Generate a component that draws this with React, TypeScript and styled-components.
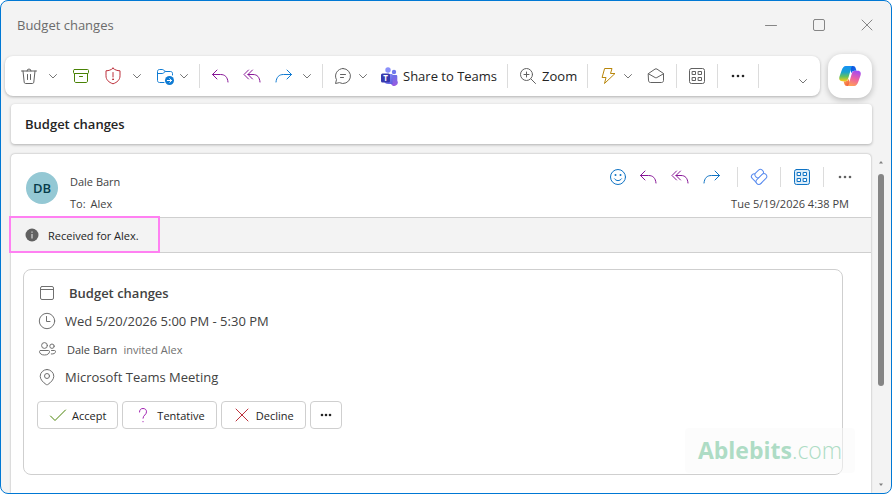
import React, { ReactNode } from "react";
import styled, { createGlobalStyle } from "styled-components";

const GlobalStyle = createGlobalStyle`
  * { box-sizing: border-box; }
  body {
    margin: 0;
    background: #fff;
    font-family: "Open Sans", "Noto Sans", sans-serif;
    font-size: 13px;
    color: #242424;
  }
  button { font: inherit; color: inherit; }
  h1, h2, p { margin: 0; font: inherit; }
`;

const Window = styled.div`
  display: flex;
  flex-direction: column;
  height: 100vh;
  overflow: hidden;
  border: 1px solid #0078d4;
  border-radius: 8px;
  background: #f3f3f3;
`;

const TitleBar = styled.header`
  display: flex;
  align-items: center;
  justify-content: space-between;
  flex: none;
  height: 48px;
  padding-left: 16px;
  color: #6b6b6b;
`;

const PlainButton = styled.button`
  display: inline-flex;
  align-items: center;
  justify-content: center;
  flex: none;
  padding: 0;
  border: 0;
  background: none;
`;

const WindowButton = styled(PlainButton)`
  width: 48px;
  height: 48px;
  color: #858585;
`;

const ToolbarRow = styled.div`
  display: flex;
  align-items: center;
  flex: none;
  gap: 8px;
  height: 44px;
  margin: 5px 19px 0 4px;
`;

const Toolbar = styled.div`
  display: flex;
  align-items: center;
  flex: 1;
  gap: 8px;
  height: 40px;
  padding: 0 9px 0 12px;
  border-radius: 8px;
  background: #fff;
  box-shadow: 0 1px 3px rgba(0, 0, 0, 0.28);
`;

const IconButton = styled(PlainButton)<{ $color?: string }>`
  width: 24px;
  height: 32px;
  color: ${(p) => p.$color ?? "#616161"};
`;

const ChevronButton = styled(PlainButton)<{ $narrow?: boolean }>`
  width: ${(p) => (p.$narrow ? 14 : 16)}px;
  height: 32px;
  color: #757575;
`;

const OverflowButton = styled(ChevronButton)`
  align-items: flex-end;
  height: 20px;
  margin-left: auto;
`;

const LabelButton = styled(PlainButton)<{ $start?: number }>`
  gap: 4px;
  padding: 0 2px 0 ${(p) => p.$start ?? 0}px;
  height: 32px;
  white-space: nowrap;
  > svg { color: #616161; }
`;

const Group = styled.div<{ $gap?: number; $end?: number }>`
  display: flex;
  align-items: center;
  gap: ${(p) => p.$gap ?? 0}px;
  margin-right: ${(p) => p.$end ?? 0}px;
`;

const Divider = styled.span<{ $height?: number }>`
  flex: none;
  width: 1px;
  height: ${(p) => p.$height ?? 24}px;
  background: #dcdcdc;
`;

const CopilotButton = styled(PlainButton)`
  width: 44px;
  height: 44px;
  border-radius: 14px;
  background: #fff;
  box-shadow: 0 2px 6px rgba(0, 0, 0, 0.24);
`;

const SubjectCard = styled.h1`
  display: flex;
  align-items: center;
  flex: none;
  height: 40px;
  margin: 6px 19px 0 10px;
  padding: 0 14px;
  border-radius: 4px;
  background: #fff;
  box-shadow: 0 1px 3px rgba(0, 0, 0, 0.28);
  font-weight: 600;
`;

const MessageArea = styled.main`
  display: grid;
  grid-template-columns: minmax(0, 1fr) 20px;
  flex: 1;
  min-height: 0;
  margin: 10px 0 0 10px;
`;

const MessageCard = styled.article`
  position: relative;
  border-radius: 4px 4px 0 0;
  background: #fff;
  box-shadow: 0 0 2px rgba(0, 0, 0, 0.36);
`;

const MessageHeader = styled.div`
  display: flex;
  align-items: center;
  height: 63px;
  padding: 0 14px 0 15px;
  gap: 12px;
`;

const Avatar = styled.span`
  display: flex;
  align-items: center;
  justify-content: center;
  width: 32px;
  height: 32px;
  margin-top: 4px;
  border-radius: 50%;
  background: #94c8d4;
  color: #063b4a;
  font-weight: 600;
`;

const Sender = styled.div`
  flex: 1;
  padding-top: 14px;
  font-size: 11px;
  line-height: 22px;
  color: #424242;
`;

const HeaderSide = styled.div`
  display: flex;
  flex-direction: column;
  align-items: flex-end;
  padding-top: 4px;
`;

const HeaderActions = styled.div`
  display: flex;
  align-items: center;
  gap: 9px;
  height: 32px;
`;

const SentTime = styled.time`
  padding-right: 8px;
  font-size: 11px;
  line-height: 22px;
  color: #424242;
`;

const Notice = styled.div`
  position: relative;
  display: flex;
  align-items: center;
  gap: 9px;
  height: 36px;
  padding-left: 14px;
  border: solid #cfcfcf;
  border-width: 1px 0;
  background: #f3f3f3;
  font-size: 11px;
`;

const Highlight = styled.span`
  position: absolute;
  top: -2px;
  left: -2px;
  width: 151px;
  height: 37px;
  border: 2px solid #ff80f2;
`;

const EventCard = styled.section`
  margin: 16px 28px 0 12px;
  padding: 9px 13px 45px;
  border: 1px solid #cfcfcf;
  border-radius: 8px;
`;

const EventRow = styled.div<{ $gap?: number; $small?: boolean }>`
  display: flex;
  align-items: center;
  gap: ${(p) => p.$gap ?? 8}px;
  height: 28px;
  font-size: ${(p) => (p.$small ? 11 : 13)}px;
  color: #424242;
  > svg { color: #707070; }
`;

const EventTitle = styled.h2`
  font-weight: 600;
`;

const Muted = styled.span`
  color: #707070;
`;

const Responses = styled.div`
  display: flex;
  gap: 4px;
  margin-top: 10px;
`;

const ResponseButton = styled(PlainButton)<{ $compact?: boolean }>`
  gap: 5px;
  height: 28px;
  padding: ${(p) => (p.$compact ? "0 8px" : "0 11px")};
  border: 1px solid #cfcfcf;
  border-radius: 4px;
  background: #fff;
  font-size: 11px;
`;

const Watermark = styled.div`
  position: absolute;
  right: 16px;
  bottom: 20px;
  width: 170px;
  height: 45px;
  border-radius: 4px;
  background: rgba(250, 250, 250, 0.55);
  color: #aedcc5;
  font-size: 23px;
  font-weight: 300;
  line-height: 44px;
  text-align: center;
  white-space: nowrap;
  strong { font-weight: 700; }
`;

const ScrollBar = styled.div`
  display: flex;
  flex-direction: column;
  align-items: center;
  padding: 6px 0;
  color: #808080;
`;

const ScrollTrack = styled.div`
  flex: 1;
  margin: 10px 0;
`;

const ScrollThumb = styled.div`
  width: 6px;
  height: 71%;
  border-radius: 3px;
  background: #858585;
`;

const Svg = ({ w = 20, h = w, children }: { w?: number; h?: number; children: ReactNode }) => (
  <svg width={w} height={h} viewBox={`0 0 ${w} ${h}`} fill="none" stroke="currentColor" strokeWidth="1" strokeLinecap="round" strokeLinejoin="round" aria-hidden="true">
    {children}
  </svg>
);

const Chevron = () => <Svg w={10}><path d="M1.500 3.500 5 7l3.500-3.500" /></Svg>;
const More = ({ w = 16, step = 5, r = 1.3 }: { w?: number; step?: number; r?: number }) => (
  <Svg w={w} h={4}>
    <g fill="currentColor" stroke="none">
      <circle cx={w / 2 - step} cy="2" r={r} />
      <circle cx={w / 2} cy="2" r={r} />
      <circle cx={w / 2 + step} cy="2" r={r} />
    </g>
  </Svg>
);
const Trash = () => (
  <Svg><path d="M2.500 5h15M8 5a2 2 0 0 1 4 0M4 5l1.200 11.200c.1.8.6 1.300 1.400 1.300h6.800c.8 0 1.300-.5 1.400-1.300L16 5M8.500 8.500v5M11.500 8.500v5" /></Svg>
);
const Archive = () => (
  <Svg><rect x="2.500" y="3.500" width="15" height="4" rx="1" /><path d="M3.500 7.500v7.500c0 1 .6 1.500 1.500 1.500h10c.9 0 1.500-.5 1.500-1.500V7.500M8.500 10.500h3" /></Svg>
);
const Shield = () => (
  <Svg><path d="M10 2.300c2 1.700 4.200 2.400 7 2.500v5c0 4-2.700 6.500-7 8-4.300-1.500-7-4-7-8v-5c2.800-.1 5-.8 7-2.500ZM10 6.500v4.500" /><circle cx="10" cy="13.300" r=".5" fill="currentColor" /></Svg>
);
const FolderMove = () => (
  <Svg>
    <path d="M9 16.500H4.500c-1.200 0-2-.8-2-2v-9c0-1.200.8-2 2-2h2.700c.6 0 1 .2 1.400.6L10.200 5.500h5.300c1.200 0 2 .8 2 2V9M2.500 7.500h4.700c.6 0 1-.2 1.400-.6l1.600-1.400" />
    <circle cx="14.500" cy="14.500" r="4.500" fill="currentColor" stroke="none" />
    <path d="M12.300 14.500h4.200M14.800 12.700l1.800 1.800-1.800 1.800" stroke="#fff" />
  </Svg>
);
const Reply = () => <Svg><path d="M7 4 2.500 8.500 7 13M2.500 8.500h8c4.500 0 7 2.500 7.500 7.500" /></Svg>;
const ReplyAll = () => <Svg><path d="M6.500 4 2 8.500 6.500 13M10.500 4 6 8.500l4.500 4.500M6 8.500h5c4.200 0 6.500 2.500 7 7.500" /></Svg>;
const Forward = () => <Svg><path d="M13 4l4.500 4.500L13 13M17.500 8.500h-8C5 8.500 2.500 11 2 16" /></Svg>;
const Chat = () => <Svg><path d="M10 2.500a7.500 7.500 0 1 1-3.600 14.100L2.500 17.500l1-3.800A7.500 7.500 0 0 1 10 2.500ZM7.500 8.500h5M7.500 11.500h3" /></Svg>;
const ZoomIn = () => <Svg><circle cx="8.500" cy="8.500" r="6" /><path d="m13 13 4.500 4.500M8.500 6v5M6 8.500h5" /></Svg>;
const Bolt = () => <Svg><path d="M7 2.500h7l-1.500 5H17L6.500 17.500l1.500-6H4.500Z" /></Svg>;
const OpenMail = () => (
  <Svg><path d="M2.500 7.500 9 3.100c.7-.4 1.300-.4 2 0l6.500 4.400v7c0 1.200-.8 2-2 2h-11c-1.200 0-2-.8-2-2ZM2.500 7.800 9.200 11.600c.6.300 1 .3 1.600 0l6.700-3.800" /></Svg>
);
const Apps = ({ tint = "none" }: { tint?: string }) => (
  <Svg><rect x="2.500" y="2.500" width="15" height="15" rx="2" fill={tint} /><path fill="#fff" d="M5.500 5.500h3v3h-3ZM11.500 5.500h3v3h-3ZM5.500 11.500h3v3h-3ZM11.500 11.500h3v3h-3Z" /></Svg>
);
const Smile = () => (
  <Svg><circle cx="10" cy="10" r="7.500" /><path d="M6.500 11.800c1.700 2.500 5.300 2.500 7 0" /><g fill="currentColor" stroke="none"><circle cx="7.500" cy="8" r="1" /><circle cx="12.500" cy="8" r="1" /></g></Svg>
);
const Loop = () => (
  <Svg>
    <g fill="#fff">
      <rect x="-6.200" y="-2.700" width="12.400" height="5.400" rx="2.700" transform="translate(7.600 12) rotate(45)" />
      <rect x="-4.600" y="-2.900" width="9.200" height="5.800" rx="2.600" transform="translate(10.200 6.600) rotate(-45)" />
      <rect x="-6.400" y="-2.700" width="12.800" height="5.400" rx="2.700" transform="translate(12.400 12) rotate(-45)" />
    </g>
  </Svg>
);
const Teams = () => (
  <svg width="20" height="20" viewBox="0 0 20 20" aria-hidden="true">
    <defs>
      <linearGradient id="teamsBody" x1="0" y1="0" x2="1" y2="1"><stop stopColor="#a2a5ff" /><stop offset="1" stopColor="#5559df" /></linearGradient>
      <linearGradient id="teamsSide" x1="0" y1="0" x2="0" y2="1"><stop stopColor="#6b70e8" /><stop offset="1" stopColor="#9a5be0" /></linearGradient>
    </defs>
    <circle cx="15" cy="6" r="2.200" fill="#6f78ed" />
    <path d="M12 9h5c.8 0 1.300.5 1.300 1.300v4.400a3.500 3.500 0 0 1-6.300 3.300Z" fill="url(#teamsSide)" />
    <circle cx="9" cy="4" r="2.700" fill="#8b90fa" />
    <path d="M5 8h8.500v10H9a4 4 0 0 1-4-4Z" fill="url(#teamsBody)" />
    <rect x="2" y="7.500" width="9" height="9" rx="1.500" fill="#3638ae" />
    <text x="6.500" y="14.800" fill="#fff" fontSize="8" fontWeight="700" textAnchor="middle">T</text>
  </svg>
);
const Copilot = () => (
  <svg width="24" height="24" viewBox="0 0 24 24" aria-hidden="true">
    <defs>
      <linearGradient id="cpLeft" x1="0" y1="0" x2="0" y2="1"><stop stopColor="#1790f5" /><stop offset=".4" stopColor="#17a3cf" /><stop offset=".7" stopColor="#63c15e" /><stop offset="1" stopColor="#f8cc19" /></linearGradient>
      <linearGradient id="cpRight" x1=".6" y1="0" x2=".3" y2="1"><stop stopColor="#a64af0" /><stop offset=".5" stopColor="#ec60a2" /><stop offset="1" stopColor="#ffa055" /></linearGradient>
      <linearGradient id="cpTop" x1="0" y1="0" x2="1" y2="1"><stop stopColor="#084bd5" /><stop offset="1" stopColor="#1b73f5" /></linearGradient>
      <linearGradient id="cpBottom" x1="0" y1="0" x2="1" y2="1"><stop stopColor="#ffb657" /><stop offset="1" stopColor="#ef4438" /></linearGradient>
    </defs>
    <path d="M11 2h4c1.500 0 2.200.8 2.700 2.200l.8 2.600h-2c-1.500 0-2.500.8-3 2.500Z" fill="url(#cpTop)" />
    <path d="M13 22H9c-1.500 0-2.200-.8-2.700-2.200l-.8-2.600h2c1.500 0 2.500-.8 3-2.500Z" fill="url(#cpBottom)" />
    <path d="M14.500 2H7.800C5.800 2 4.600 3.800 3.700 6.200L1.500 12.500c-.8 2.400 0 4.700 2.800 4.700h2.900c1.700 0 2.600-1.200 3-2.700l2.500-8.700C13.200 3.900 13.500 2.400 14.500 2Z" fill="url(#cpLeft)" />
    <path d="M9.500 22h6.700c2 0 3.200-1.800 4.100-4.200l2.200-6.300c.8-2.400 0-4.700-2.800-4.700h-2.900c-1.700 0-2.600 1.200-3 2.700l-2.500 8.700C10.800 20.100 10.500 21.600 9.500 22Z" fill="url(#cpRight)" />
  </svg>
);
const Info = () => (
  <svg width="14" height="14" viewBox="0 0 14 14" aria-hidden="true"><circle cx="7" cy="7" r="6.500" fill="#616161" /><path d="M7 6v4.500M7 3.500v1.200" stroke="#d8d8d8" strokeWidth="1.200" /></svg>
);
const Calendar = () => <Svg><rect x="3.500" y="3.500" width="13" height="13" rx="1.500" /><path d="M3.500 6.500h13" /></Svg>;
const Clock = () => <Svg><circle cx="10" cy="10" r="7.700" /><path d="M9.500 5.500v5H13" /></Svg>;
const People = () => (
  <Svg><circle cx="7.500" cy="6.500" r="2.900" /><circle cx="15" cy="7.200" r="2.200" /><path d="M3.500 11.500h8c.7 0 1 .4 1 1 0 2-1.800 3.500-5 3.500s-5-1.500-5-3.500c0-.6.300-1 1-1ZM14.500 11.500h3c.7 0 1 .4 1 1 0 1.700-1.700 2.700-4.200 2.500" /></Svg>
);
const Pin = () => <Svg><path d="M10 2.500a6.800 6.800 0 0 1 6.800 6.800c0 3.400-3.300 6.300-5.800 8.100-.7.500-1.300.5-2 0-2.500-1.800-5.800-4.700-5.800-8.100A6.800 6.800 0 0 1 10 2.500Z" /><circle cx="10" cy="9" r="2.500" /></Svg>;

const VIOLET = "#881798";
const BLUE = "#0f73c4";

export default function App() {
  return (
    <>
      <GlobalStyle />
      <Window>
        <TitleBar>
          <span>Budget changes</span>
          <Group>
            <WindowButton aria-label="Minimize"><Svg w={12}><path d="M.5 6.500h11" /></Svg></WindowButton>
            <WindowButton aria-label="Maximize"><Svg w={12}><rect x=".5" y=".5" width="11" height="11" rx="1.500" /></Svg></WindowButton>
            <WindowButton aria-label="Close"><Svg w={12}><path d="m1 1 10 10M11 1 1 11" /></Svg></WindowButton>
          </Group>
        </TitleBar>

        <ToolbarRow>
          <Toolbar role="toolbar" aria-label="Message">
            <Group $gap={4}>
              <IconButton aria-label="Delete"><Trash /></IconButton>
              <ChevronButton aria-label="Delete options"><Chevron /></ChevronButton>
            </Group>
            <IconButton aria-label="Archive" $color="#498205"><Archive /></IconButton>
            <Group $gap={4}>
              <IconButton aria-label="Report" $color="#bc2f3a"><Shield /></IconButton>
              <ChevronButton aria-label="Report options"><Chevron /></ChevronButton>
            </Group>
            <Group>
              <IconButton aria-label="Move" $color="#0f7bd3"><FolderMove /></IconButton>
              <ChevronButton aria-label="Move options" $narrow><Chevron /></ChevronButton>
            </Group>
            <Divider />
            <IconButton aria-label="Reply" $color={VIOLET}><Reply /></IconButton>
            <IconButton aria-label="Reply all" $color={VIOLET}><ReplyAll /></IconButton>
            <Group $gap={4}>
              <IconButton aria-label="Forward" $color="#0f7bd3"><Forward /></IconButton>
              <ChevronButton aria-label="Forward options" $narrow><Chevron /></ChevronButton>
            </Group>
            <Divider />
            <Group>
              <IconButton aria-label="Chat"><Chat /></IconButton>
              <ChevronButton aria-label="Chat options"><Chevron /></ChevronButton>
            </Group>
            <LabelButton><Teams />Share to Teams</LabelButton>
            <Divider />
            <LabelButton $start={2}><ZoomIn />Zoom</LabelButton>
            <Divider />
            <Group>
              <IconButton aria-label="Quick steps" $color="#b8860b"><Bolt /></IconButton>
              <ChevronButton aria-label="Quick step options"><Chevron /></ChevronButton>
            </Group>
            <IconButton aria-label="Mark as unread"><OpenMail /></IconButton>
            <Divider />
            <IconButton aria-label="Apps"><Apps /></IconButton>
            <Divider />
            <IconButton aria-label="More commands" $color="#242424"><More /></IconButton>
            <Divider />
            <OverflowButton aria-label="Ribbon options"><Chevron /></OverflowButton>
          </Toolbar>
          <CopilotButton aria-label="Copilot"><Copilot /></CopilotButton>
        </ToolbarRow>

        <SubjectCard>Budget changes</SubjectCard>

        <MessageArea>
          <MessageCard>
            <MessageHeader>
              <Avatar>DB</Avatar>
              <Sender>
                <p>Dale Barn</p>
                <Group $gap={5}><span>To:</span><span>Alex</span></Group>
              </Sender>
              <HeaderSide>
                <HeaderActions>
                  <Group $gap={6} $end={4}>
                    <IconButton aria-label="React" $color={BLUE}><Smile /></IconButton>
                    <Group $gap={8}>
                      <IconButton aria-label="Reply to sender" $color={VIOLET}><Reply /></IconButton>
                      <IconButton aria-label="Reply to everyone" $color={VIOLET}><ReplyAll /></IconButton>
                      <IconButton aria-label="Forward message" $color={BLUE}><Forward /></IconButton>
                    </Group>
                  </Group>
                  <Divider $height={20} />
                  <IconButton aria-label="Share to Loop" $color="#5b8def"><Loop /></IconButton>
                  <Divider $height={20} />
                  <IconButton aria-label="Message apps" $color={BLUE}><Apps tint="#dcecf8" /></IconButton>
                  <Divider $height={20} />
                  <IconButton aria-label="More actions"><More /></IconButton>
                </HeaderActions>
                <SentTime dateTime="2026-05-19T16:38">Tue 5/19/2026 4:38 PM</SentTime>
              </HeaderSide>
            </MessageHeader>

            <Notice>
              <Info />
              <span>Received for Alex.</span>
              <Highlight />
            </Notice>

            <EventCard>
              <EventRow $gap={12}><Calendar /><EventTitle>Budget changes</EventTitle></EventRow>
              <EventRow><Clock /><span>Wed 5/20/2026 5:00 PM - 5:30 PM</span></EventRow>
              <EventRow $gap={10} $small>
                <People />
                <Group $gap={6}><span>Dale Barn</span><Muted>invited Alex</Muted></Group>
              </EventRow>
              <EventRow><Pin /><span>Microsoft Teams Meeting</span></EventRow>
              <Responses>
                <ResponseButton><Svg w={18}><path d="m1.500 10 4.500 4.500L16.500 4" stroke="#498205" /></Svg>Accept</ResponseButton>
                <ResponseButton><Svg w={18}><path d="M5.500 6c0-2.200 1.300-3.500 3.500-3.500s3.500 1.300 3.500 3.300c0 3-3.500 3.400-3.500 6.400M9 15.500v.3" stroke="#a020b0" /></Svg>Tentative</ResponseButton>
                <ResponseButton><Svg w={18}><path d="m3 3 12 12M15 3 3 15" stroke="#bc2f3a" /></Svg>Decline</ResponseButton>
                <ResponseButton $compact aria-label="More responses"><More w={14} step={4} /></ResponseButton>
              </Responses>
            </EventCard>
            <Watermark><strong>Ablebits</strong>.com</Watermark>
          </MessageCard>

          <ScrollBar>
            <Svg w={6} h={4}><path d="M1 3.500 3 1l2 2.500Z" fill="currentColor" stroke="none" /></Svg>
            <ScrollTrack><ScrollThumb /></ScrollTrack>
            <Svg w={6} h={4}><path d="M1 .5 3 3 5 .5Z" fill="currentColor" stroke="none" /></Svg>
          </ScrollBar>
        </MessageArea>
      </Window>
    </>
  );
}
